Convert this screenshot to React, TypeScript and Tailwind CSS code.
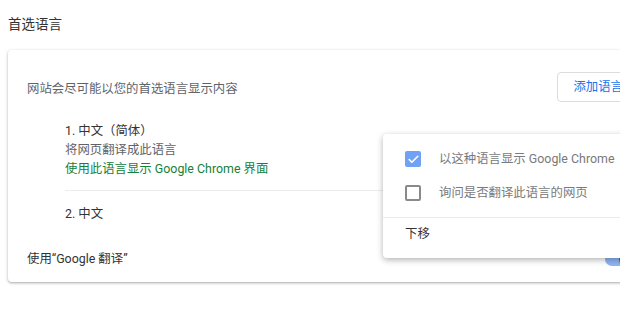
import { Check } from "lucide-react";

const font = { fontFamily: 'Roboto, "Noto Sans CJK SC", sans-serif' };

const MenuRow = ({ checked, label }: { checked: boolean; label: string }) => (
  <div className="flex h-[34px] items-center pl-[22px]">
    {checked ? (
      <span className="flex h-[16px] w-[16px] items-center justify-center rounded-[2px] bg-[#6fa2f4]">
        <Check size={13} strokeWidth={3} className="text-white" />
      </span>
    ) : (
      <span className="h-[16px] w-[16px] rounded-[2px] border-2 border-[#8a8a8a]" />
    )}
    <span className="ml-[18px] text-[12.4px] text-[#7a7a7a]">{label}</span>
  </div>
);

export default function App() {
  return (
    <div className="relative h-[309px] w-[620px] overflow-hidden bg-white text-[12.4px]" style={font}>
      <div className="px-2 pt-4 text-[13.5px] leading-4 text-[#333]">首选语言</div>

      <div className="ml-2 mt-[18px] w-[652px] rounded-[4px] bg-white pb-[7px] pl-[19px] pr-[21px] pt-[22px] shadow-[0_1px_2px_rgba(60,64,67,0.3),0_1px_3px_1px_rgba(60,64,67,0.12)]">
        <div className="flex h-[30px] items-center justify-between">
          <span className="mt-[4px] text-[#5f6368]">网站会尽可能以您的首选语言显示内容</span>
          <button className="h-[30px] rounded-[4px] border border-[#dadce0] px-[15px] text-[12.4px] text-[#1a73e8]">
            添加语言
          </button>
        </div>

        <div className="ml-[38px] mt-[19px] leading-[19px]">
          <div className="text-[#333]">1. 中文（简体）</div>
          <div className="text-[#5f6368]">将网页翻译成此语言</div>
          <div className="text-[#188038]">使用此语言显示 Google Chrome 界面</div>
          <div className="mt-[12px] h-px bg-[#ececec]" />
          <div className="pt-[13px] text-[#333]">2. 中文</div>
        </div>

        <div className="mt-[20px] flex h-[32px] items-center justify-between">
          <span className="text-[#333]">使用“Google 翻译”</span>
          <span className="relative h-[14px] w-[34px] rounded-full bg-[#8fb5f5]">
            <span className="absolute right-0 top-[-3px] h-[20px] w-[20px] rounded-full bg-[#1a73e8]" />
          </span>
        </div>
      </div>

      <div className="absolute left-[383px] top-[134px] w-[270px] rounded-[4px] bg-white py-[8px] shadow-[0_2px_6px_rgba(0,0,0,0.3)]">
        <MenuRow checked label="以这种语言显示 Google Chrome" />
        <MenuRow checked={false} label="询问是否翻译此语言的网页" />
        <div className="mt-[7px] h-px bg-[#ececec]" />
        <div className="flex h-[32px] items-center pl-[22px] text-[#333]">下移</div>
      </div>
    </div>
  );
}
